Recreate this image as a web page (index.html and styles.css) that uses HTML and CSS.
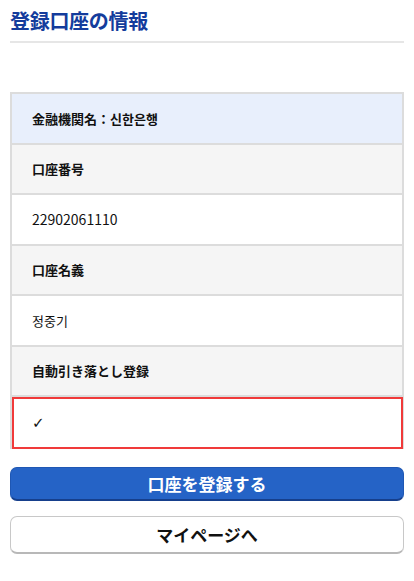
FILE: index.html
```html
<!DOCTYPE html>
<html lang="ja">
<head>
<meta charset="utf-8">
<title>登録口座の情報</title>
<link rel="stylesheet" href="styles.css">
</head>
<body>
<div class="page">
  <h1 class="title">登録口座の情報</h1>
  <div class="info">
    <div class="row row-bank">金融機関名：신한은행</div>
    <div class="row row-head">口座番号</div>
    <div class="row row-value row-number">22902061110</div>
    <div class="row row-head">口座名義</div>
    <div class="row row-value">정중기</div>
    <div class="row row-head">自動引き落とし登録</div>
    <div class="row row-value row-error"><span class="check">✓</span></div>
  </div>
  <div class="actions">
    <button class="btn btn-primary" type="button">口座を登録する</button>
    <button class="btn btn-secondary" type="button">マイページへ</button>
  </div>
</div>
</body>
</html>
```
FILE: styles.css
```css
html, body {
  margin: 0;
  padding: 0;
  background: #fff;
}
body {
  font-family: "Noto Sans CJK JP", "Noto Sans CJK KR", "Noto Sans", sans-serif;
  color: #111;
}
.page {
  padding: 0 10px;
}
.title {
  margin: 0;
  padding: 7px 0 6px;
  font-size: 20px;
  line-height: 28px;
  font-weight: 700;
  color: #143c9c;
  border-bottom: 2px solid #e6e6e6;
  letter-spacing: -0.3px;
}
.info {
  margin-top: 49px;
  border: 2px solid #dcdcdc;
  border-bottom: none;
}
.row {
  height: 48.5px;
  display: flex;
  align-items: center;
  padding-left: 20px;
  border-bottom: 2px solid #dcdcdc;
  font-size: 13px;
}
.row-bank {
  background: #e8effc;
  font-weight: 700;
}
.row-head {
  background: #f5f5f5;
  font-weight: 700;
}
.row-value {
  background: #fff;
}
.row-number {
  font-size: 14px;
}
.row-error {
  height: 48px;
  border: 2px solid #f03a3a;
  padding-left: 18px;
  margin: 0 -1px 0 0;
}
.check {
  font-family: "DejaVu Sans", sans-serif;
  font-size: 15px;
  font-weight: 700;
}
.actions {
  margin-top: 18px;
  display: flex;
  flex-direction: column;
  gap: 15px;
}
.btn {
  display: block;
  width: 100%;
  margin: 0;
  font-family: inherit;
  font-weight: 700;
  font-size: 17px;
  cursor: pointer;
  border-radius: 7px;
}
.btn-primary {
  height: 34px;
  background: #2563c6;
  color: #fff;
  border: 1px solid #1f57b3;
  border-bottom: 2px solid #163f8c;
}
.btn-secondary {
  height: 38px;
  background: #fff;
  color: #111;
  border: 1px solid #c8c8c8;
  border-bottom: 2px solid #b8b8b8;
}
```
